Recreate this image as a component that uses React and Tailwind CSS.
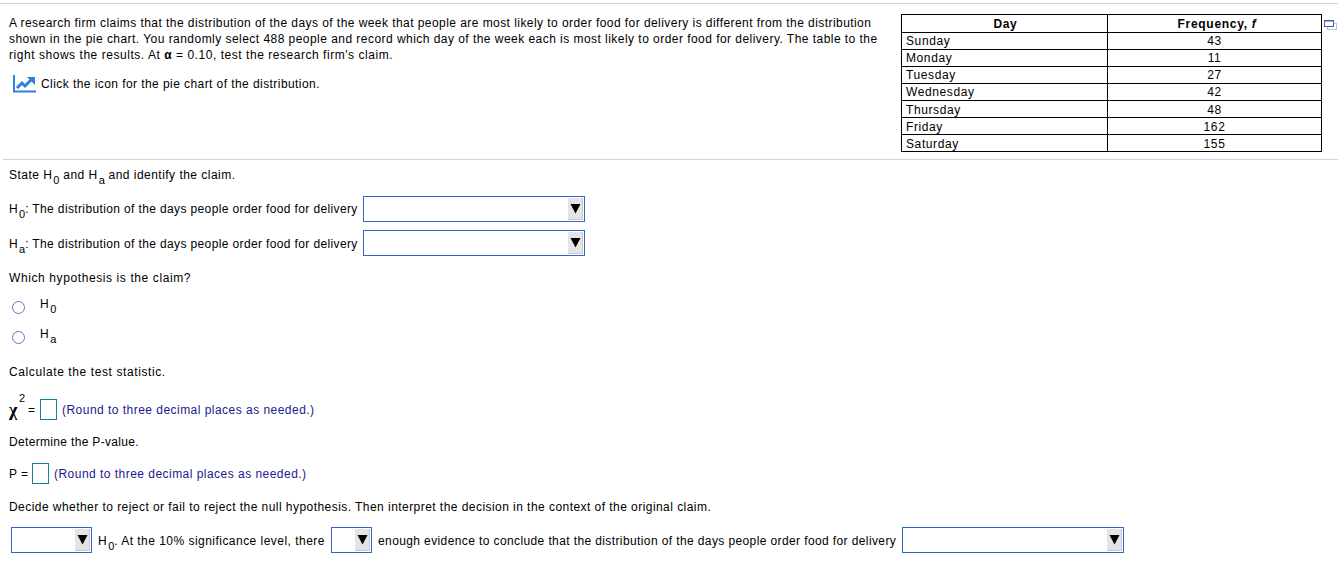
const Sel = ({ w }) => (
  <span className={`inline-flex items-center justify-end h-[26px] border border-[#3366cc] bg-white shrink-0 ${w}`}>
    <span className="flex items-center justify-center w-[15px] h-[22px] mr-px bg-[#e4e4e4] border-r border-b border-[#c8c8c8]">
      <svg width="11" height="11" viewBox="0 0 11 11"><path d="M0.5 1h10L5.5 10.5z" fill="#000" /></svg>
    </span>
  </span>
);
const Sub = ({ c }) => <span className="text-[11px] leading-none relative top-[5px] tracking-normal ml-px">{c}</span>;
const H = ({ c }) => <span>H<Sub c={c} /></span>;
const Box = () => <span className="inline-block w-[17px] h-[21px] border border-[#17809c] bg-white shrink-0" />;
const Note = () => <span className="text-[#1a1a8c]">(Round to three decimal places as needed.)</span>;
const rows = [["Sunday", 43, ""], ["Monday", 11, ""], ["Tuesday", 27, ""], ["Wednesday", 42, ""], ["Thursday", 48, "pt-[2px]"], ["Friday", 162, "pt-[2px]"], ["Saturday", 155, "pt-[2px]"]];
const Radio = ({ c }) => (
  <div className="flex items-start h-[30px]">
    <span className="ml-3 mt-[5px] w-[13px] h-[13px] rounded-full border-[1.5px] border-[#5b78c8] bg-white" />
    <span className="ml-[15px] leading-4"><H c={c} /></span>
  </div>
);
export default function App() {
  return (
    <div className="w-[1338px] h-[582px] overflow-hidden bg-white text-[12px] leading-4 text-black tracking-[0.47px]" style={{ fontFamily: '"Liberation Sans", Arial, sans-serif' }}>
      <div className="h-[4px] border-b border-[#d3d3dc] mb-[10px]" />
      <div className="flex h-[146px] ml-[3px] border-b border-[#d3d3dc]">
        <div className="w-[898px] shrink-0 pl-[6px] pt-px">
          <div className="whitespace-nowrap">
            <div className="tracking-[0.44px]">A research firm claims that the distribution of the days of the week that people are most likely to order food for delivery is different from the distribution</div>
            <div className="tracking-[0.46px]">shown in the pie chart. You randomly select 488 people and record which day of the week each is most likely to order food for delivery. The table to the</div>
            <div className="tracking-[0.54px]">right shows the results. At <b className="font-bold">α</b> = 0.10, test the research firm's claim.</div>
          </div>
          <div className="flex items-center mt-[12px] ml-[4px] tracking-[0.43px]">
            <svg width="23" height="18" viewBox="0 0 23 18" className="shrink-0 mr-[5px]">
              <path d="M1 0v16.5h22" fill="none" stroke="#2f7fde" strokeWidth="2" />
              <path d="M4 13l5-5 3 3 6-6" fill="none" stroke="#2f7fde" strokeWidth="3" />
              <path d="M14 2h8v8z" fill="#2f7fde" />
            </svg>
            <span>Click the icon for the pie chart of the distribution.</span>
          </div>
        </div>
        <div className="flex items-start tracking-[0.6px]">
          <table className="w-[421px] h-[138px] border-collapse border border-black table-fixed">
            <tbody>
              <tr className="h-[18px]">
                <th className="w-[206px] border border-black font-bold p-0 pl-[2px] leading-none">Day</th>
                <th className="border border-black font-bold p-0 pl-[5px] leading-none tracking-[0.7px]">Frequency, <i>f</i></th>
              </tr>
              {rows.map(([d, f, x]) => (
                <tr key={d} className="h-[17px]">
                  <td className={`border border-black p-0 pl-[4px] leading-none ${x}`}>{d}</td>
                  <td className={`border border-black p-0 text-center leading-none ${x}`}>{f}</td>
                </tr>
              ))}
            </tbody>
          </table>
          <svg width="13" height="11" viewBox="0 0 13 11" className="ml-[2px] mt-[6px] shrink-0">
            <rect x="3.5" y="3.5" width="9" height="6" fill="none" stroke="#b9bfdc" />
            <rect x="0.5" y="0.5" width="9" height="6" fill="white" stroke="#4a5fa8" />
            <path d="M0.5 1h9" stroke="#4a5fa8" />
          </svg>
        </div>
      </div>
      <div className="pl-[9px] pt-[7px]">
        <div className="h-[16px]">State <H c="0" /> and <H c="a" /> and identify the claim.</div>
        <div className="flex items-center h-[26px] mt-[13px]"><span className="w-[354px] whitespace-nowrap tracking-[0.37px]"><H c="0" />: The distribution of the days people order food for delivery</span><Sel w="w-[222px]" /></div>
        <div className="flex items-center h-[26px] mt-[8px]"><span className="w-[354px] whitespace-nowrap tracking-[0.37px] pt-[2px]"><H c="a" />: The distribution of the days people order food for delivery</span><Sel w="w-[222px]" /></div>
        <div className="h-[16px] mt-[14px] tracking-[0.6px]">Which hypothesis is the claim?</div>
        <div className="mt-[10px] -ml-[9px]">
          <Radio c="0" />
          <Radio c="a" />
        </div>
        <div className="h-[16px] mt-[8px] tracking-[0.6px]">Calculate the test statistic.</div>
        <div className="flex items-center h-[21px] mt-[19px]">
          <span className="relative font-bold text-[18px] w-[19px] leading-none" style={{ fontFamily: '"Liberation Serif", serif' }}>χ<span className="absolute left-[10px] -top-[8px] font-normal text-[11px] leading-none" style={{ fontFamily: '"Liberation Sans", sans-serif' }}>2</span></span>
          <span className="w-[12px]">=</span>
          <Box />
          <span className="ml-[5px]"><Note /></span>
        </div>
        <div className="h-[16px] mt-[14px] tracking-[0.33px]">Determine the P-value.</div>
        <div className="flex items-center h-[21px] mt-[13px]">
          <span className="w-[23px] whitespace-nowrap">P =</span>
          <Box />
          <span className="ml-[5px]"><Note /></span>
        </div>
        <div className="h-[16px] mt-[15px] tracking-[0.45px]">Decide whether to reject or fail to reject the null hypothesis. Then interpret the decision in the context of the original claim.</div>
        <div className="flex items-center h-[26px] mt-[12px] ml-[2px] whitespace-nowrap">
          <Sel w="w-[81px]" />
          <span className="ml-[6px] w-[233px] pt-[2px]"><H c="0" />. At the 10% significance level, there</span>
          <Sel w="w-[41px]" />
          <span className="ml-[6px] w-[524px] pt-[2px] tracking-[0.39px]">enough evidence to conclude that the distribution of the days people order food for delivery</span>
          <Sel w="w-[222px]" />
        </div>
      </div>
    </div>
  );
}
